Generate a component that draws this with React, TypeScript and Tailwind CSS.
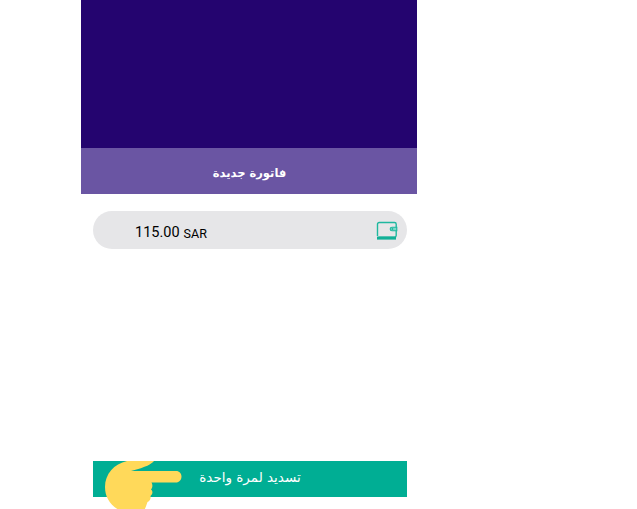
import React from 'react';

const WalletIcon = () => (
  <svg width="22" height="20" viewBox="0 0 22 20" fill="none">
    <path d="M1.5 15V3.2C1.5 2.2 2.2 1.5 3.2 1.5H18.5C19.5 1.5 20.2 2.2 20.2 3.2V14.5C20.2 15.5 19.5 16.2 18.5 16.2H2.5" stroke="#1fb89f" strokeWidth="1.4" />
    <rect x="1" y="15.6" width="19" height="3" fill="#12b097" />
    <path d="M20.8 6.2H16C14.9 6.2 14.2 7 14.2 8C14.2 9 14.9 9.8 16 9.8H20.8Z" fill="#7fd8c8" stroke="#1fb89f" strokeWidth="1.1" />
    <circle cx="16.4" cy="8" r="0.9" fill="#1fb89f" />
  </svg>
);

const PointingHand = () => (
  <svg width="80" height="49" viewBox="0 0 80 49" fill="none">
    <path
      d="M0 26C0 13 9 3 22 0H49C46 3 42 6 26 10H71C74.5 10 76.5 12.5 76.5 15.5C76.5 19 74 21.5 71 21.5H46.5C48 24 47.5 27 46 28.5C48 30 48 33 45.5 35C46 37.5 45 40 42.5 41C41.5 44 40.5 46.5 39.5 49H14C5 44 0 36 0 26Z"
      fill="#ffd95a"
    />
  </svg>
);

export default function App() {
  return (
    <div className="relative h-[509px] w-[637px] overflow-hidden bg-white font-['Liberation_Sans',sans-serif]">
      <div className="ml-[81px] flex h-full w-[336px] flex-col">
        <div className="h-[148px] bg-[#24046f]" />
        <div className="flex h-[46px] items-center justify-center bg-[#6a55a3] pt-[6px] pl-[1px] font-['DejaVu_Sans',sans-serif] text-[11.5px] font-bold text-white" dir="rtl">
          فاتورة جديدة
        </div>

        <div className="mx-3 mt-[17px] flex h-[38px] w-[314px] items-center justify-between rounded-full bg-[#e6e6e8] pt-[1px] pr-[9px] pl-[42px]">
          <div className="flex items-baseline gap-[4px] pt-[4px] font-['Roboto',sans-serif] text-black">
            <span className="text-[14.5px]">115.00</span>
            <span className="translate-y-[1px] text-[12.5px]">SAR</span>
          </div>
          <WalletIcon />
        </div>

        <div className="relative mx-3 mt-[212px] flex h-9 w-[314px] items-center justify-center bg-[#00ae94] pb-[3px] font-['DejaVu_Sans',sans-serif] text-[13.5px] text-white" dir="rtl">
          تسديد لمرة واحدة
          <div className="absolute top-0 left-[12px]" dir="ltr">
            <PointingHand />
          </div>
        </div>
      </div>
    </div>
  );
}
